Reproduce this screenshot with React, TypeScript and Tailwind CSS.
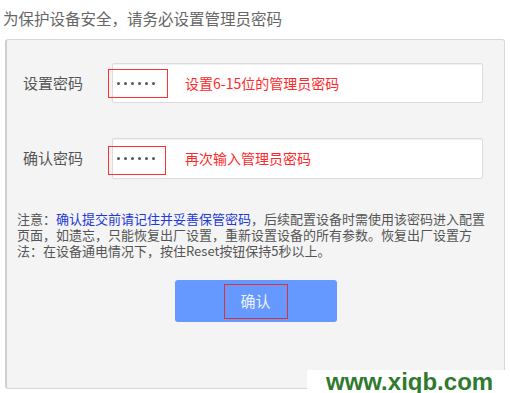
export default function App() {
  const dots = [0, 1, 2, 3, 4, 5];

  const Dots = () => (
    <div className="flex items-center gap-[4px] pl-[2px]">
      {dots.map((d) => (
        <span key={d} className="block w-[3px] h-[3px] rounded-full bg-[#555]" />
      ))}
    </div>
  );

  return (
    <div
      className="relative w-[510px] h-[393px] overflow-hidden bg-white"
      style={{ fontFamily: '"Noto Sans CJK SC", "Liberation Sans", sans-serif' }}
    >
      {/* page heading */}
      <div className="h-[39px] pl-[3px] pt-[8px] text-[15.5px] leading-[20px] text-[#666]">
        为保护设备安全，请务必设置管理员密码
      </div>

      {/* form panel */}
      <div className="ml-[5px] w-[500px] h-[350px] rounded-[3px] border border-[#d8d8d8] border-l-2 border-l-[#d0d0d0] bg-[#f4f4f4] pt-[23px]">
        {/* password */}
        <div className="flex items-center h-[40px]">
          <div className="w-[105px] pl-[16px] text-[15px] text-[#555]">设置密码</div>
          <div className="relative flex items-center gap-[30px] w-[371px] h-[40px] rounded-[2px] border border-[#dcdcdc] bg-white shadow-[inset_0_1px_1px_rgba(0,0,0,0.06)] pl-[2px]">
            <Dots />
            <span className="text-[14px] text-[#ff2a2a]">设置6-15位的管理员密码</span>
            <div className="absolute left-[-5px] top-[5px] w-[60px] h-[29px] border border-[#ff3030]" />
          </div>
        </div>

        {/* confirm */}
        <div className="flex items-center h-[41px] mt-[35px]">
          <div className="w-[105px] pl-[16px] text-[15px] text-[#555]">确认密码</div>
          <div className="relative flex items-center gap-[30px] w-[371px] h-[41px] rounded-[2px] border border-[#dcdcdc] bg-white shadow-[inset_0_1px_1px_rgba(0,0,0,0.06)] pl-[2px]">
            <Dots />
            <span className="text-[14px] text-[#ff2a2a]">再次输入管理员密码</span>
            <div className="absolute left-[-5px] top-[7px] w-[58px] h-[29px] border border-[#ff3030]" />
          </div>
        </div>

        {/* notice */}
        <div className="mt-[32px] pl-[10px] pr-[4px] text-[13px] leading-[16px] text-[#555]">
          注意：<span className="text-[#2238d8]">确认提交前请记住并妥善保管密码</span>，后续配置设备时需使用该密码进入配置
          <br />
          页面，如遗忘，只能恢复出厂设置，重新设置设备的所有参数。恢复出厂设置方
          <br />
          法：在设备通电情况下，按住Reset按钮保持5秒以上。
        </div>

        {/* submit */}
        <div className="flex justify-center mt-[21px]">
          <button className="relative w-[162px] h-[42px] rounded-[3px] bg-[#6699ff] text-[15px] text-[#eef2ff]">
            确认
            <div className="absolute left-[49px] top-[4px] w-[64px] h-[35px] border border-[#e03030]" />
          </button>
        </div>
      </div>

      {/* watermark */}
      <div className="absolute right-0 bottom-0 w-[203px] h-[23px] bg-white pl-[19px] flex items-center">
        <span
          className="text-[24px] leading-[24px] font-bold text-[#2e7a2e]"
          style={{ fontFamily: '"Liberation Sans", sans-serif' }}
        >
          www.xiqb.com
        </span>
      </div>
    </div>
  );
}
